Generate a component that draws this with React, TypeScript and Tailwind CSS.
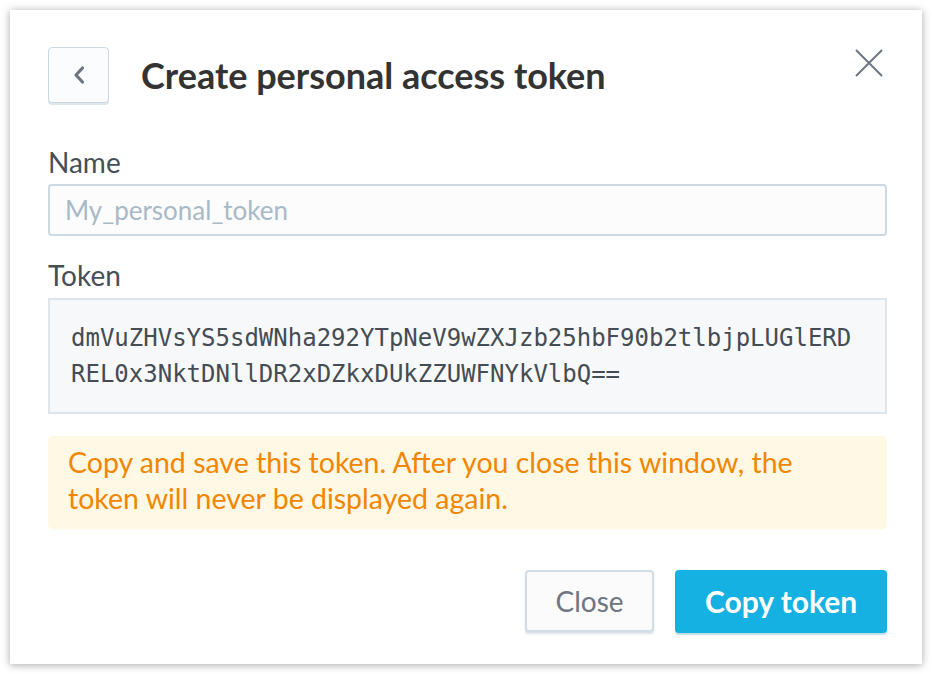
import React from "react";

const sans = { fontFamily: "Lato, 'Noto Sans', sans-serif" };

export default function App() {
  return (
    <div className="w-[932px] h-[674px] bg-white p-[10px]" style={sans}>
      <div className="w-[912px] h-[654px] bg-white shadow-[0_1px_8px_rgba(0,0,0,0.35)] pt-[37px] pl-[38px] pr-[35px] flex flex-col">
        {/* header */}
        <div className="flex items-center h-[56px]">
          <button className="w-[61px] h-[56px] rounded-[4px] border border-[#ccd8e2] bg-[#fbfcfd] shadow-[0_2px_0_rgba(200,212,222,0.6)] flex items-center justify-center">
            <svg width="14" height="20" viewBox="0 0 14 20">
              <path d="M10.5 3 L4 10 L10.5 17" fill="none" stroke="#6d7680" strokeWidth="3.2" strokeLinecap="round" strokeLinejoin="round" />
            </svg>
          </button>
          <h1 className="ml-[32px] flex-1 text-[36px] font-bold text-[#333333] leading-none">Create personal access token</h1>
          <button className="w-[30px] h-[30px] mr-[3px] -mt-[24px] flex items-center justify-center">
            <svg width="30" height="30" viewBox="0 0 30 30">
              <path d="M2 2 L28 28 M28 2 L2 28" stroke="#6d7680" strokeWidth="2" />
            </svg>
          </button>
        </div>

        {/* Name */}
        <div className="mt-[44px] text-[28px] leading-[30px] text-[#464e56]">Name</div>
        <div className="mt-[7px] h-[52px] rounded-[4px] border-2 border-[#ccd8e2] bg-[#fcfcfd] flex items-center px-[15px]">
          <span className="text-[26px] text-[#a8b9c7]">My_personal_token</span>
        </div>

        {/* Token */}
        <div className="mt-[24px] text-[28px] leading-[30px] text-[#464e56]">Token</div>
        <div
          className="mt-[8px] h-[116px] border-2 border-[#dee5eb] bg-[#f6f8f9] pl-[21px] pt-[20px] text-[24px] leading-[36px] text-[#454c54]"
          style={{ fontFamily: "'DejaVu Sans Mono', monospace" }}
        >
          <div>dmVuZHVsYS5sdWNha292YTpNeV9wZXJzb25hbF90b2tlbjpLUGlERD</div>
          <div>REL0x3NktDNllDR2xDZkxDUkZZUWFNYkVlbQ==</div>
        </div>

        {/* warning */}
        <div className="mt-[22px] h-[93px] rounded-[5px] bg-[#fef8e5] px-[20px] pt-[8px] text-[28.5px] leading-[36px] text-[#f18600]">
          Copy and save this token. After you close this window, the
          <br />
          token will never be displayed again.
        </div>

        {/* buttons */}
        <div className="mt-[41px] flex justify-end gap-[21px]">
          <button className="w-[129px] h-[62px] rounded-[4px] border-2 border-[#d3dde5] bg-[#fbfbfc] shadow-[0_2px_2px_rgba(180,195,208,0.5)] text-[28px] text-[#6d7680]">
            Close
          </button>
          <button className="w-[212px] h-[63px] rounded-[4px] bg-[#14b1e2] shadow-[0_2px_1px_rgba(10,120,160,0.25)] text-[30px] font-bold text-white">
            Copy token
          </button>
        </div>
      </div>
    </div>
  );
}
